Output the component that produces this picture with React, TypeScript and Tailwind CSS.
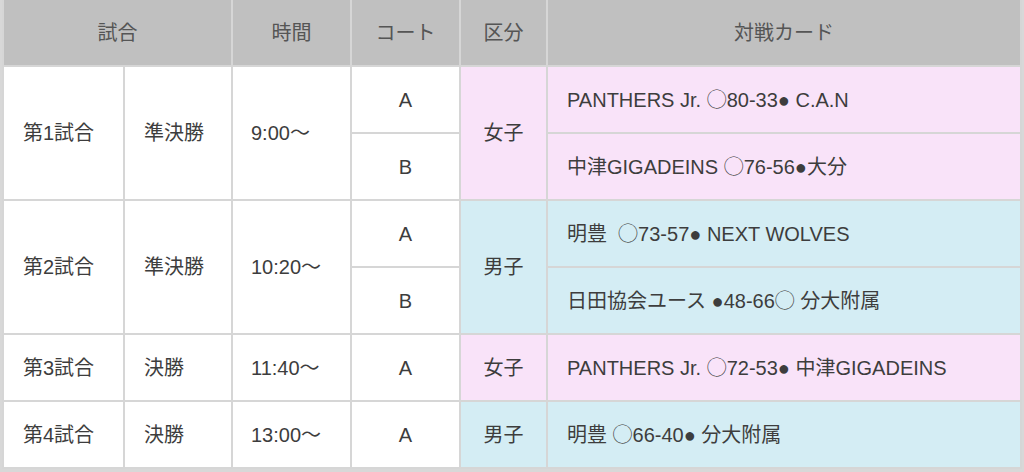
const font = { fontFamily: '"Liberation Sans", "Noto Sans CJK JP", sans-serif' };

type Row = {
  game?: { label: string; round: string; time: string; span: number };
  court: string;
  div?: { label: string; span: number; tone: "girl" | "boy" };
  tone: "girl" | "boy";
  card: string;
};

const rows: Row[] = [
  { game: { label: "第1試合", round: "準決勝", time: "9:00〜", span: 2 }, court: "A", div: { label: "女子", span: 2, tone: "girl" }, tone: "girl", card: "PANTHERS Jr. ◯80-33● C.A.N" },
  { court: "B", tone: "girl", card: "中津GIGADEINS ◯76-56●大分" },
  { game: { label: "第2試合", round: "準決勝", time: "10:20〜", span: 2 }, court: "A", div: { label: "男子", span: 2, tone: "boy" }, tone: "boy", card: "明豊  ◯73-57● NEXT WOLVES" },
  { court: "B", tone: "boy", card: "日田協会ユース ●48-66◯ 分大附属" },
  { game: { label: "第3試合", round: "決勝", time: "11:40〜", span: 1 }, court: "A", div: { label: "女子", span: 1, tone: "girl" }, tone: "girl", card: "PANTHERS Jr. ◯72-53● 中津GIGADEINS" },
  { game: { label: "第4試合", round: "決勝", time: "13:00〜", span: 1 }, court: "A", div: { label: "男子", span: 1, tone: "boy" }, tone: "boy", card: "明豊 ◯66-40● 分大附属" },
];

const toneBg = { girl: "bg-[#f9e3f9]", boy: "bg-[#d4edf4]" };

export default function App() {
  return (
    <div className="w-[1024px] h-[472px] bg-[#d8d8d8] overflow-hidden" style={font}>
      <table className="table-fixed border-collapse w-[1020px] ml-[2px] text-[20px] text-[#3d3d3d]">
        <colgroup>
          <col className="w-[121px]" />
          <col className="w-[108px]" />
          <col className="w-[119px]" />
          <col className="w-[109px]" />
          <col className="w-[87px]" />
          <col />
        </colgroup>
        <thead>
          <tr className="h-[66px] bg-[#c0c0c0] text-[#555]">
            <th colSpan={2} className="font-normal border-2 border-t-0 border-[#d6d6d6]">試合</th>
            <th className="font-normal border-2 border-t-0 border-[#d6d6d6]">時間</th>
            <th className="font-normal border-2 border-t-0 border-[#d6d6d6]">コート</th>
            <th className="font-normal border-2 border-t-0 border-[#d6d6d6]">区分</th>
            <th className="font-normal border-2 border-t-0 border-[#d6d6d6]">対戦カード</th>
          </tr>
        </thead>
        <tbody>
          {rows.map((r, i) => (
            <tr key={i} className="h-[67px]">
              {r.game && (
                <>
                  <td rowSpan={r.game.span} className="bg-white border-2 border-[#d6d6d6] pl-[19px]">{r.game.label}</td>
                  <td rowSpan={r.game.span} className="bg-white border-2 border-[#d6d6d6] pl-[19px]">{r.game.round}</td>
                  <td rowSpan={r.game.span} className="bg-white border-2 border-[#d6d6d6] pl-[18px]">{r.game.time}</td>
                </>
              )}
              <td className="bg-white border-2 border-[#d6d6d6] text-center">{r.court}</td>
              {r.div && (
                <td rowSpan={r.div.span} className={`${toneBg[r.div.tone]} border-2 border-[#d6d6d6] text-center`}>{r.div.label}</td>
              )}
              <td className={`${toneBg[r.tone]} border-2 border-[#d6d6d6] pl-[19px] whitespace-pre`}>{r.card}</td>
            </tr>
          ))}
        </tbody>
      </table>
    </div>
  );
}
